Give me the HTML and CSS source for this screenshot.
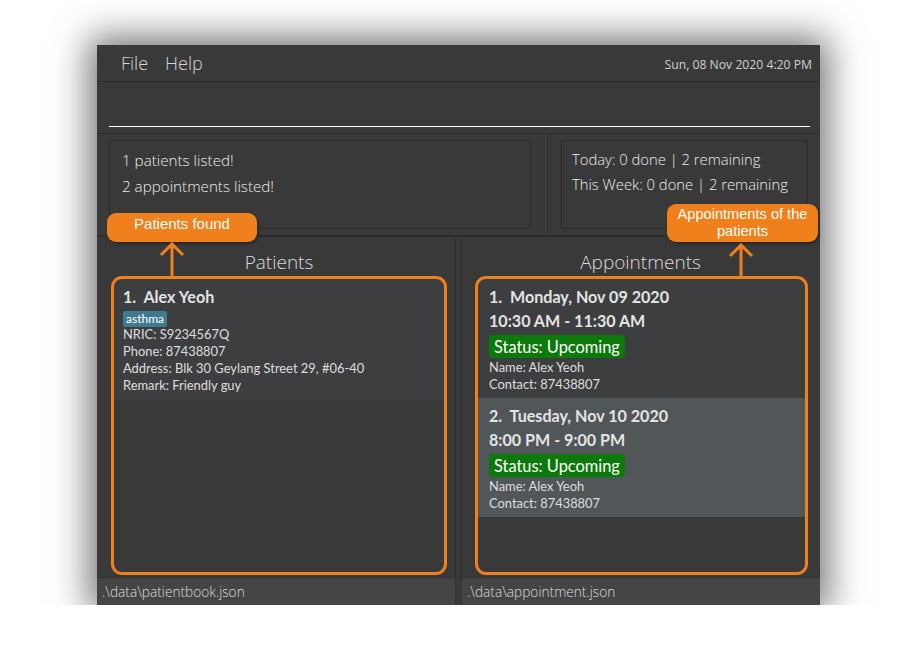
FILE: index.html
```html
<!DOCTYPE html>
<html>
<head>
<meta charset="utf-8">
<link rel="stylesheet" href="styles.css">
</head>
<body>
<div class="window">
  <div class="menubar">
    <div class="menus"><span class="menu">File</span><span class="menu">Help</span></div>
    <div class="clock">Sun, 08 Nov 2020 4:20 PM</div>
  </div>
  <div class="command"><div class="command-input"></div></div>
  <div class="results">
    <div class="result-pane">
      <div class="result-box">
        <div class="result-line">1 patients listed!</div>
        <div class="result-line">2 appointments listed!</div>
      </div>
    </div>
    <div class="result-divider"></div>
    <div class="result-pane right">
      <div class="result-box stats">
        <div class="result-line">Today: 0 done | 2 remaining</div>
        <div class="result-line">This Week: 0 done | 2 remaining</div>
      </div>
    </div>
  </div>
  <div class="lists">
    <div class="pane pane-left">
      <div class="pane-title">Patients</div>
      <div class="list framed">
        <div class="card">
          <div class="card-title">1.&nbsp;&nbsp;Alex Yeoh</div>
          <div class="tags"><span class="tag">asthma</span></div>
          <div class="field">NRIC: S9234567Q</div>
          <div class="field">Phone: 87438807</div>
          <div class="field">Address: Blk 30 Geylang Street 29, #06-40</div>
          <div class="field">Remark: Friendly guy</div>
        </div>
      </div>
    </div>
    <div class="pane-divider"></div>
    <div class="pane pane-right">
      <div class="pane-title">Appointments</div>
      <div class="list framed appt-list">
        <div class="card appt">
          <div class="card-title">1.&nbsp;&nbsp;Monday, Nov 09 2020</div>
          <div class="appt-time">10:30 AM - 11:30 AM</div>
          <div class="status-row"><span class="status">Status: Upcoming</span></div>
          <div class="field">Name: Alex Yeoh</div>
          <div class="field">Contact: 87438807</div>
        </div>
        <div class="card appt alt">
          <div class="card-title">2.&nbsp;&nbsp;Tuesday, Nov 10 2020</div>
          <div class="appt-time">8:00 PM - 9:00 PM</div>
          <div class="status-row"><span class="status">Status: Upcoming</span></div>
          <div class="field">Name: Alex Yeoh</div>
          <div class="field">Contact: 87438807</div>
        </div>
      </div>
    </div>
  </div>
  <div class="statusbars">
    <div class="statusbar">.\data\patientbook.json</div>
    <div class="status-divider"></div>
    <div class="statusbar">.\data\appointment.json</div>
  </div>

  <div class="callout callout-patients">Patients found</div>
  <div class="callout callout-appts"><div class="callout-line">Appointments of the</div><div class="callout-line">patients</div></div>
  <svg class="arrow arrow-patients" width="26" height="36" viewBox="0 0 26 36">
    <path d="M13 2 V36 M2 13 L13 2 L24 13" fill="none" stroke="#ef801b" stroke-width="3"/>
  </svg>
  <svg class="arrow arrow-appts" width="26" height="36" viewBox="0 0 26 36">
    <path d="M13 2 V36 M2 13 L13 2 L24 13" fill="none" stroke="#ef801b" stroke-width="3"/>
  </svg>
</div>
</body>
</html>
```
FILE: styles.css
```css
* { box-sizing: border-box; }
html, body { margin: 0; background: #ffffff; }
body { padding: 45px 0 0 97px; font-family: "Lato", "Open Sans", sans-serif; }

.window {
  position: relative;
  width: 723px;
  height: 560px;
  background: #393939;
  display: flex;
  flex-direction: column;
  box-shadow: 0 0 34px 8px rgba(0, 0, 0, 0.55);
}

.menubar {
  height: 37px;
  border-bottom: 1px solid #2b2b2b;
  display: flex;
  align-items: center;
  justify-content: space-between;
  padding: 0 8px 0 24px;
}
.menus { display: flex; gap: 17px; }
.menu { color: #d6d6d6; font-size: 18px; font-weight: 300; font-family: "Open Sans", sans-serif; }
.clock { color: #d0d0d0; font-size: 12.2px; font-family: "Open Sans", sans-serif; padding-top: 2px; }

.command {
  height: 52px;
  border-bottom: 1px solid #2b2b2b;
  padding: 0 10px 0 12px;
  display: flex;
  flex-direction: column;
  justify-content: flex-end;
}
.command-input { height: 7px; border-top: 1.5px solid #ffffff; }

.results {
  height: 102px;
  display: flex;
  border-bottom: 1px solid #2b2b2b;
}
.result-pane { flex: 0 0 444px; padding: 6px 10px 6px 12px; display: flex; }
.result-pane.right { flex: 1; padding: 6px 12px 6px 13px; border-left: 1px solid #2e2e2e; }
.result-divider { width: 6px; background: #3a3a3a; border-right: 1px solid #464646; }
.result-box {
  flex: 1;
  border: 1px solid #2a2a2a;
  padding: 6px 12px;
  color: #ececec;
  font-family: "Open Sans", sans-serif;
  font-size: 15.2px;
  font-weight: 300;
  white-space: nowrap;
}
.result-line { line-height: 26px; }
.stats { font-size: 14.8px; padding: 6px 10px; }
.stats .result-line { line-height: 25px; }

.lists { flex: 1; display: flex; border-top: 1px solid #2e2e2e; }
.pane { flex: 0 0 358px; display: flex; flex-direction: column; }
.pane-left { padding: 0 10px 3px 16px; }
.pane-right { padding: 0 14px 3px 15px; }
.pane-divider { flex: 0 0 7px; background: #3a3a3a; border-left: 1px solid #2c2c2c; border-right: 1px solid #2c2c2c; }
.pane-title {
  height: 42px;
  text-align: center;
  color: #dcdcdc;
  font-family: "Open Sans", sans-serif;
  font-weight: 300;
  font-size: 19px;
  line-height: 50px;
}
.pane-right .pane-title { padding-right: 2px; }

.list { position: relative; flex: 1; }
.list.framed::after {
  content: "";
  position: absolute;
  left: -2px; right: -2px; top: -3px; bottom: -1px;
  border: 3px solid #ef801b;
  border-radius: 11px;
}

.card {
  background: #3d3e40;
  padding: 6px 10px 6px 10px;
  color: #dcdcdc;
}
.card-title { font-weight: 700; font-size: 16.1px; line-height: 23px; color: #e4e4e4; }
.tags { margin-top: -1px; height: 19px; }
.tag {
  display: inline-block;
  background: #3e7b91;
  color: #ffffff;
  font-size: 12px;
  line-height: 16px;
  padding: 0 3px;
  border-radius: 2px;
}
.field { font-size: 12.9px; line-height: 17px; color: #dedede; }

.appt { padding: 6px 12px 5px 12px; }
.appt.alt { background: #515658; }
.appt-time { font-weight: 700; font-size: 16.1px; line-height: 26px; color: #e4e4e4; }
.status-row { margin-top: 1px; height: 23px; margin-bottom: 1px; }
.status {
  display: inline-block;
  background: #0b7a0b;
  color: #ffffff;
  font-size: 16.4px;
  line-height: 23px;
  padding: 0 5px;
  border-radius: 4px;
}

.statusbars { height: 28px; display: flex; background: #454545; border-top: 1px solid #333; }
.statusbar {
  flex: 0 0 358px;
  color: #dcdcdc;
  font-family: "Open Sans", sans-serif;
  font-weight: 300;
  font-size: 13.7px;
  line-height: 27px;
  padding-left: 5px;
}
.status-divider { flex: 0 0 7px; background: #3a3a3a; border-left: 1px solid #333; border-right: 1px solid #333; }

.callout {
  position: absolute;
  background: #ef801b;
  color: #ffffff;
  font-family: "Liberation Sans", sans-serif;
  font-size: 14px;
  text-align: center;
  border-radius: 9px;
  box-shadow: 1px 2px 3px rgba(0,0,0,0.35);
}
.callout-patients { left: 10px; top: 168px; width: 150px; height: 29px; line-height: 22px; font-size: 15px; }
.callout-appts { left: 570px; top: 159px; width: 151px; height: 38px; padding-top: 2px; font-size: 14.6px; }
.callout-line { height: 17px; line-height: 17px; }

.arrow { position: absolute; }
.arrow-patients { left: 62px; top: 197px; }
.arrow-appts { left: 631px; top: 198px; }
```
